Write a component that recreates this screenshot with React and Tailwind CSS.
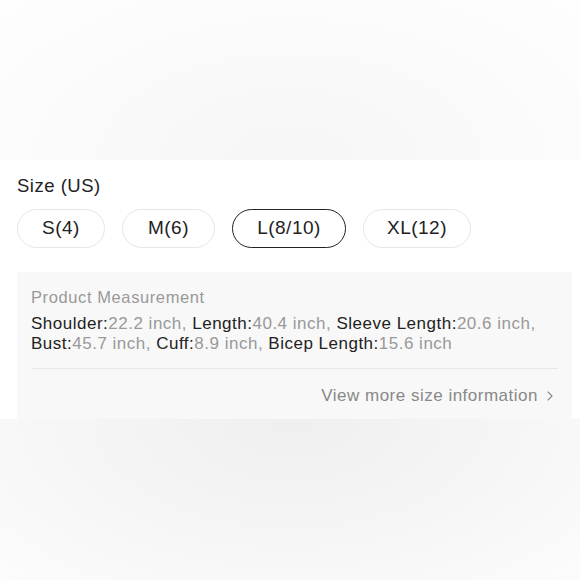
import { ChevronRight } from 'lucide-react';

const sizes = [
  { label: 'S(4)', w: 'w-[88px]' },
  { label: 'M(6)', w: 'w-[93px]' },
  { label: 'L(8/10)', w: 'w-[114px]', active: true },
  { label: 'XL(12)', w: 'w-[108px]' },
];

const measures = [
  ['Shoulder', '22.2 inch'],
  ['Length', '40.4 inch'],
  ['Sleeve Length', '20.6 inch'],
  ['Bust', '45.7 inch'],
  ['Cuff', '8.9 inch'],
  ['Bicep Length', '15.6 inch'],
];

// one line of "label:value, label:value"
const Measure = ({ items, trailing }) => (
  <div className="whitespace-nowrap">
    {items.map(([k, v], i) => (
      <span key={k}>
        <span className="text-[#222]">{k}:</span>
        <span className="text-[#999]">{v}</span>
        <span className="text-[#999]">{i < items.length - 1 || trailing ? ', ' : ''}</span>
      </span>
    ))}
  </div>
);

export default function App() {
  return (
    <div className="w-[580px] h-[580px] flex flex-col bg-white font-['Liberation_Sans',Arial,sans-serif]">
      {/* top shade */}
      <div className="h-[160px] shrink-0 bg-[radial-gradient(ellipse_at_50%_100%,#f6f6f6_0%,#fafafa_50%,#fefefe_100%)]" />

      <div className="h-[259px] shrink-0 flex flex-col bg-white pl-[17px] pr-[8px]">
        <div className="pt-[15px] text-[18.5px] leading-[22px] tracking-[0.5px] text-[#222]">Size (US)</div>
        <div className="mt-[12px] flex gap-[17px]">
          {sizes.map(s => (
            <div
              key={s.label}
              className={
                'h-[39px] rounded-full flex items-center justify-center text-[19px] tracking-[0.5px] text-[#222] ' +
                s.w +
                (s.active ? ' border-[1.5px] border-[#222]' : ' border border-[#e6e6e6]')
              }
            >
              {s.label}
            </div>
          ))}
        </div>

        <div className="mt-[24px] flex-1 bg-[#f8f8f8] px-[14px]">
          <div className="pt-[15px] text-[16.5px] leading-[20px] tracking-[0.6px] text-[#999]">Product Measurement</div>
          <div className="mt-[7px] text-[17px] leading-[20px] tracking-[0.5px]">
            <Measure items={measures.slice(0, 3)} trailing />
            <Measure items={measures.slice(3)} />
          </div>
          <div className="mt-[14px] h-px bg-[#e8e8e8]" />
          <div className="mt-[14px] flex items-center justify-end gap-[4px] text-[17px] tracking-[0.5px] text-[#888]">
            <span>View more size information</span>
            <ChevronRight className="w-[16px] h-[16px]" strokeWidth={1.6} />
          </div>
        </div>
      </div>

      {/* bottom shade */}
      <div className="flex-1 bg-[radial-gradient(ellipse_at_50%_0%,#efefef_0%,#f5f5f5_50%,#fcfcfc_100%)]" />
    </div>
  );
}
